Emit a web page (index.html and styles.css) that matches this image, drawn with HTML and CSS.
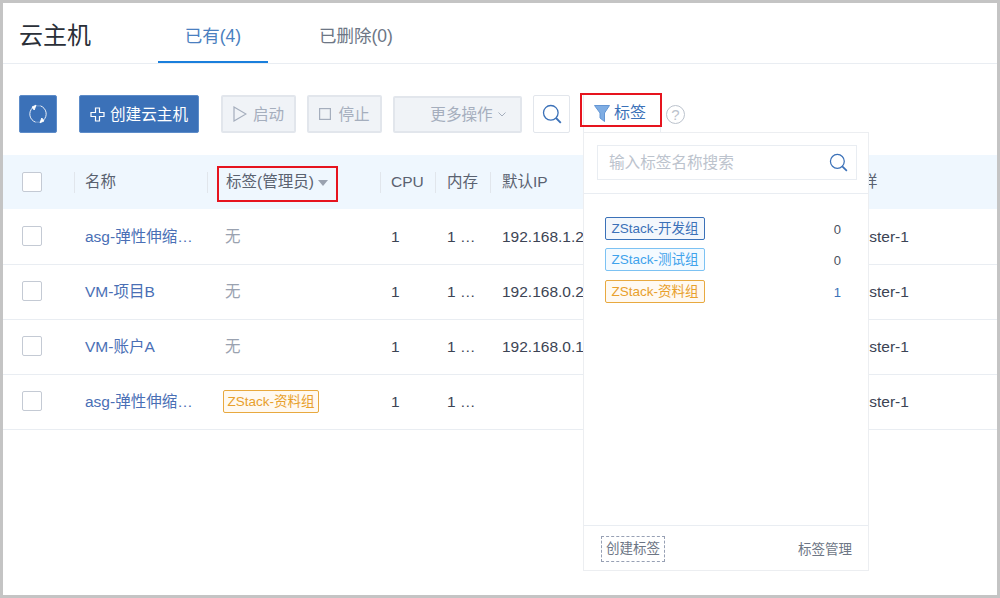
FILE: index.html
```html
<!DOCTYPE html>
<html lang="zh-CN">
<head>
<meta charset="utf-8">
<title>云主机</title>
<link rel="stylesheet" href="styles.css">
</head>
<body>
<div class="frame">
  <header class="head">
    <h1 class="title">云主机</h1>
    <nav class="tabs">
      <a class="tab active">已有(4)</a>
      <a class="tab">已删除(0)</a>
    </nav>
  </header>

  <div class="toolbar">
    <button class="btn primary square" aria-label="刷新">
      <svg width="20" height="20" viewBox="0 0 20 20" fill="none" stroke="#fff" stroke-width=".9"><path d="M4.600 3.800A8.500 8.500 0 0 0 7.500 18.100"/><path d="M15.400 16.200A8.500 8.500 0 0 0 12.500 1.900"/><path d="M8 1.200 4 3 6.200 6z" fill="#fff"/><path d="M12 18.800 16 17 13.800 14z" fill="#fff"/><path d="M8 1.900 12.500 1.900M12 18.100 7.500 18.100" stroke-opacity=".35"/></svg>
    </button>
    <button class="btn primary create">
      <svg width="15" height="15" viewBox="0 0 15 15" fill="none" stroke="#fff" stroke-width="1.200"><path d="M5.500 1h4v4.500H14v4H9.500V14h-4V9.500H1v-4h4.500z"/></svg>
      <span>创建云主机</span>
    </button>
    <button class="btn off start">
      <svg width="14" height="16" viewBox="0 0 14 16" fill="none" stroke="#a5aebd" stroke-width="1.200"><path d="M1 1v14l12-7z"/></svg>
      <span>启动</span>
    </button>
    <button class="btn off stop">
      <svg width="12" height="12" viewBox="0 0 12 12" fill="none" stroke="#a5aebd" stroke-width="1.200"><rect x=".6" y=".6" width="10.800" height="10.800"/></svg>
      <span>停止</span>
    </button>
    <button class="btn off more">
      <span>更多操作</span>
      <svg width="8" height="5" viewBox="0 0 8 5" fill="none" stroke="#a5aebd"><path d="M.5.500 4 4 7.500.500"/></svg>
    </button>
    <button class="btn search" aria-label="搜索">
      <svg width="20" height="20" viewBox="0 0 20 20" fill="none" stroke="#3b71b8" stroke-width="1.300"><circle cx="8.800" cy="8.800" r="7.300"/><path d="m14 14 4.800 4.800" stroke-width="1.800"/></svg>
    </button>
    <div class="tagfilter">
      <button class="tagbtn">
        <svg class="funnel" width="16" height="17" viewBox="0 0 16 17"><path d="M.5.500h15L10.500 8v8.500L6 13V8z" fill="#7fade3" stroke="#6496d4"/></svg>
        <span>标签</span>
      </button>
      <span class="redbox"></span>
      <div class="popup">
        <div class="psearch">
          <div class="pinput">
            <span class="ph">输入标签名称搜索</span>
            <svg width="19" height="19" viewBox="0 0 20 20" fill="none" stroke="#3b71b8" stroke-width="1.300"><circle cx="8.800" cy="8.800" r="7.300"/><path d="m14 14 4.800 4.800" stroke-width="1.800"/></svg>
          </div>
        </div>
        <ul class="plist">
          <li><span class="tag dev">ZStack-开发组</span><span class="count">0</span></li>
          <li><span class="tag test">ZStack-测试组</span><span class="count">0</span></li>
          <li><span class="tag data">ZStack-资料组</span><span class="count one">1</span></li>
        </ul>
        <div class="pfoot">
          <a class="pcreate">创建标签</a>
          <a class="pmanage">标签管理</a>
        </div>
      </div>
    </div>
    <span class="help">?</span>
  </div>

  <div class="table">
    <div class="row hd">
      <div class="cell c0"><span class="cb"></span></div>
      <div class="cell c1 sep">名称</div>
      <div class="cell c2 sep">标签(管理员)<i class="caret"></i><span class="redbox2"></span></div>
      <div class="cell c3 sep">CPU</div>
      <div class="cell c4 sep">内存</div>
      <div class="cell c5 sep">默认IP</div>
      <div class="cell c6 lastcol">详</div>
    </div>
    <div class="row">
      <div class="cell c0"><span class="cb"></span></div>
      <div class="cell c1 link">asg-弹性伸缩…</div>
      <div class="cell c2 none">无</div>
      <div class="cell c3">1</div>
      <div class="cell c4">1 …</div>
      <div class="cell c5">192.168.1.2</div>
      <div class="cell c6">Cluster-1</div>
    </div>
    <div class="row">
      <div class="cell c0"><span class="cb"></span></div>
      <div class="cell c1 link">VM-项目B</div>
      <div class="cell c2 none">无</div>
      <div class="cell c3">1</div>
      <div class="cell c4">1 …</div>
      <div class="cell c5">192.168.0.2</div>
      <div class="cell c6">Cluster-1</div>
    </div>
    <div class="row">
      <div class="cell c0"><span class="cb"></span></div>
      <div class="cell c1 link">VM-账户A</div>
      <div class="cell c2 none">无</div>
      <div class="cell c3">1</div>
      <div class="cell c4">1 …</div>
      <div class="cell c5">192.168.0.1</div>
      <div class="cell c6">Cluster-1</div>
    </div>
    <div class="row">
      <div class="cell c0"><span class="cb"></span></div>
      <div class="cell c1 link">asg-弹性伸缩…</div>
      <div class="cell c2"><span class="tag data rowtag">ZStack-资料组</span></div>
      <div class="cell c3">1</div>
      <div class="cell c4">1 …</div>
      <div class="cell c5"></div>
      <div class="cell c6">Cluster-1</div>
    </div>
  </div>
</div>
</body>
</html>
```

FILE: styles.css
```css
* { box-sizing: border-box; }
html, body { margin: 0; padding: 0; height: 100%; }
body {
  font-family: "Liberation Sans", "Noto Sans CJK SC", sans-serif;
  font-size: 15px;
  color: #3c4454;
  background: #fff;
}
a { cursor: pointer; }
button { font: inherit; }

.frame {
  width: 1000px;
  height: 598px;
  border: 3px solid #c4c4c4;
  background: #fff;
  position: relative;
  overflow: hidden;
}

/* header */
.head {
  height: 61px;
  display: flex;
  align-items: stretch;
  padding-left: 16px;
  border-bottom: 1px solid #e9edf2;
}
.title {
  margin: 15px 0 0;
  font-size: 24px;
  font-weight: 400;
  line-height: 36px;
  color: #2a2f38;
  width: 139px;
}
.tabs { display: flex; gap: 33px; }
.tab {
  width: 110px;
  text-align: center;
  font-size: 17.500px;
  line-height: 20px;
  padding-top: 23px;
  color: #6d7685;
  height: 60px;
}
.tab.active {
  color: #4a7fc0;
  border-bottom: 2px solid #1a7fdc;
}

/* toolbar */
.toolbar {
  display: flex;
  align-items: flex-start;
  padding: 31px 0 0 16px;
  height: 91px;
}
.btn {
  height: 38px;
  border: 1px solid transparent;
  border-radius: 2px;
  display: flex;
  align-items: center;
  justify-content: center;
  padding: 0;
  background: #fff;
  font-size: 15.600px;
}
.btn span { padding-bottom: 3px; }
.primary { background: #3b71b8; border-color: #5d8cc9; color: #fff; }
.square { width: 38px; }
.create { width: 120px; margin-left: 22px; gap: 5px; }
.off { background: #f0f3f7; border-color: #e2e6ec; color: #a5aebd; border-width: 2px; }
.start { width: 75px; margin-left: 22px; gap: 6px; }
.stop { width: 75px; margin-left: 11px; gap: 7px; }
.more { width: 129px; margin-left: 11px; gap: 5px; padding-left: 21px; margin-top: 1px; height: 37px; }
.search { width: 37px; margin-left: 11px; border: 1px solid #e2e6ec; }
.tagfilter { position: relative; margin-left: 13px; width: 78px; }
.tagbtn {
  width: 78px;
  height: 38px;
  background: #fff;
  border: 1px solid #e9edf2;
  border-width: 0 1px;
  color: #3b71b8;
  font-size: 16px;
  display: flex;
  align-items: center;
  justify-content: center;
  gap: 4px;
  padding: 0 4px 5px 0;
}
.tagbtn span { padding-bottom: 1px; }
.funnel { margin-top: 3px; }
.redbox {
  position: absolute;
  left: -3px;
  top: -2px;
  width: 82px;
  height: 34px;
  border: 2px solid #e6141e;
  pointer-events: none;
}
.help {
  margin: 10px 0 0 5px;
  width: 19px;
  height: 19px;
  border: 1px solid #bcc3cd;
  border-radius: 50%;
  color: #bcc3cd;
  font-size: 15px;
  line-height: 17px;
  text-align: center;
}

/* popup */
.popup {
  position: absolute;
  z-index: 5;
  left: 0;
  top: 37px;
  width: 286px;
  height: 439px;
  background: #fff;
  border: 1px solid #eceef1;
  display: flex;
  flex-direction: column;
}
.psearch {
  padding: 12px 11px 13px 13px;
  border-bottom: 1px solid #e9edf2;
  height: 61px;
}
.pinput {
  height: 35px;
  border: 1px solid #e9edf2;
  display: flex;
  align-items: center;
  justify-content: space-between;
  padding: 0 8px 0 11px;
}
.ph { color: #bcc3cd; font-size: 15.600px; padding-bottom: 3px; }
.plist {
  list-style: none;
  margin: 0;
  padding: 23px 21px 0;
  flex: 1;
  display: flex;
  flex-direction: column;
  gap: 9.500px;
}
.plist li {
  display: flex;
  justify-content: space-between;
  align-items: center;
  height: 22px;
}
.tag {
  display: inline-block;
  width: 100px;
  height: 23px;
  line-height: 21px;
  border: 1px solid;
  border-radius: 2px;
  font-size: 13.500px;
  text-align: center;
  white-space: nowrap;
}
.dev { color: #3b71b8; border-color: #3b71b8; background: #f3f7fc; }
.test { color: #3fa3ec; border-color: #7cc2f3; background: #f4faff; }
.data { color: #e8a02c; border-color: #e8a93f; background: #fff9f1; }
.count { font-size: 13px; color: #4a5260; margin-right: 6px; padding-top: 2px; }
.count.one { color: #3b71b8; }
.pfoot {
  height: 45px;
  border-top: 1px solid #e9edf2;
  display: flex;
  align-items: center;
  justify-content: space-between;
  padding: 1px 16px 0 17px;
  font-size: 13.500px;
  color: #6d7685;
}
.pcreate {
  width: 64px;
  height: 26px;
  line-height: 24px;
  text-align: center;
  border: 1px dashed #97a0b4;
}
.pmanage { padding-bottom: 2px; }

/* table */
.table { width: 100%; }
.row {
  display: grid;
  grid-template-columns: 71px 133px 173px 55px 55px 345px 1fr;
  height: 55px;
  align-items: center;
  border-bottom: 1px solid #e9edf2;
  color: #3c4454;
}
.row.hd {
  height: 54px;
  margin-bottom: 1px;
  background: #eff7fe;
  border-bottom: 0;
  color: #5a6270;
}
.cell {
  position: relative;
  white-space: nowrap;
  padding: 0 0 1px 11px;
  font-size: 15.500px;
  line-height: 22px;
}
.c0 { padding: 0 0 2px 19px; display: flex; }
.hd .c0 { padding-bottom: 0; }
.c2 { padding-left: 18px; }
.hd .c2 { padding-left: 19px; }
.c4, .c5 { padding-left: 12px; }
.lastcol { padding-left: 27px; }
.sep::before {
  content: "";
  position: absolute;
  left: 0;
  top: 1px;
  bottom: 1px;
  width: 1px;
  background: #e1e6ec;
}
.cb {
  width: 20px;
  height: 20px;
  border: 1px solid #c4cad4;
  border-radius: 2px;
  background: #fff;
}
.link { color: #4a6fb5; }
.none { color: #9aa2b0; }
.rowtag { width: 96px; margin-left: -2px; display: block; }
.caret {
  display: inline-block;
  margin-left: 4px;
  vertical-align: 1px;
  border: 5px solid transparent;
  border-top: 6px solid #9aa2b0;
  border-bottom: 0;
}
.redbox2 {
  position: absolute;
  left: 10px;
  top: -5px;
  width: 121px;
  height: 36px;
  border: 2px solid #e6141e;
  pointer-events: none;
}
```
